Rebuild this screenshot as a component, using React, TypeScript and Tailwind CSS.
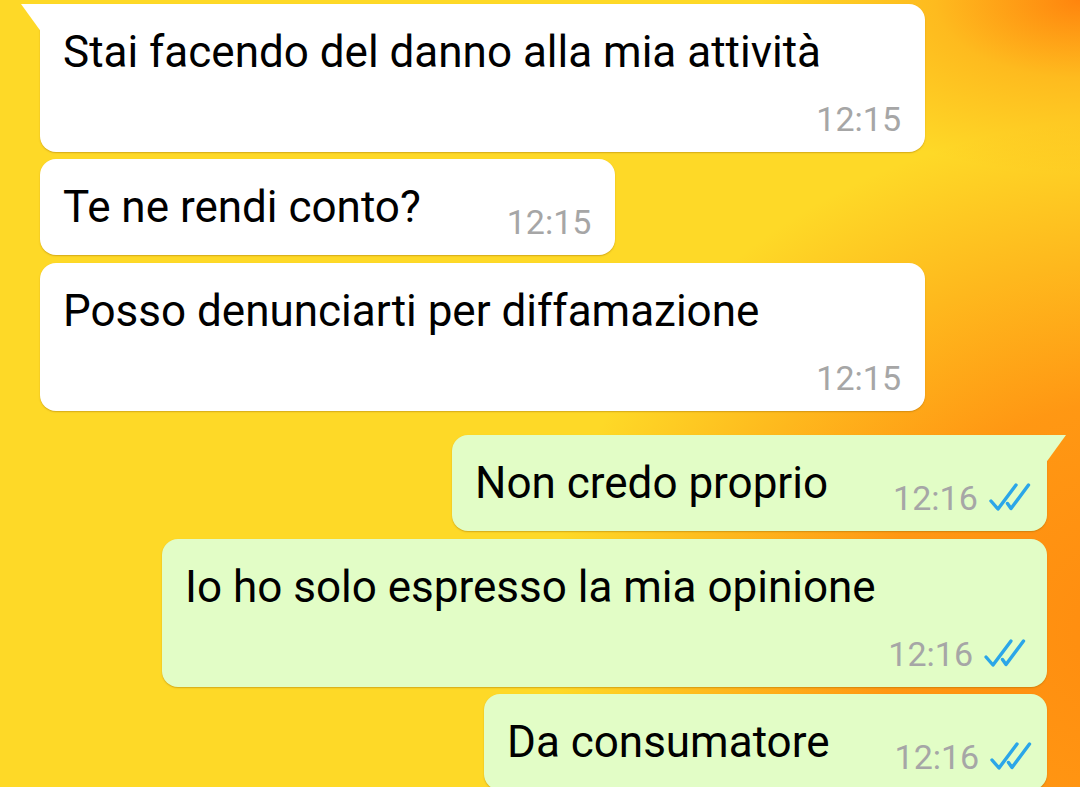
import React from "react";

type Msg = {
  id: number;
  text: string;
  time: string;
  out: boolean;
  inline: boolean;
  tail?: boolean;
  width: string;
  gap?: string;
  top: string;
};

const messages: Msg[] = [
  { id: 1, text: "Stai facendo del danno alla mia attività", time: "12:15", out: false, inline: false, tail: true, width: "w-[885px]", top: "mt-[4px]" },
  { id: 2, text: "Te ne rendi conto?", time: "12:15", out: false, inline: true, width: "w-[575px]", gap: "gap-[86px]", top: "mt-[7px]" },
  { id: 3, text: "Posso denunciarti per diffamazione", time: "12:15", out: false, inline: false, width: "w-[885px]", top: "mt-[8px]" },
  { id: 4, text: "Non credo proprio", time: "12:16", out: true, inline: true, tail: true, width: "w-[595px]", gap: "gap-[65px]", top: "mt-[24px]" },
  { id: 5, text: "Io ho solo espresso la mia opinione", time: "12:16", out: true, inline: false, width: "w-[885px]", top: "mt-[8px]" },
  { id: 6, text: "Da consumatore", time: "12:16", out: true, inline: true, width: "w-[563px]", gap: "gap-[65px]", top: "mt-[7px]" },
];

const Ticks = () => (
  <svg width="44" height="32" viewBox="0 0 44 32" fill="none" className="ml-[10px] mt-[-2px]">
    <path d="M3 20 L10 28 L28 4" stroke="#2ba6e8" strokeWidth="3.4" strokeLinecap="round" strokeLinejoin="round" />
    <path d="M19.5 22.5 L23 27.5 L40.5 4" stroke="#2ba6e8" strokeWidth="3.4" strokeLinecap="round" strokeLinejoin="round" />
  </svg>
);

const Time = ({ m }: { m: Msg }) => (
  <div className="flex items-center h-[40px] text-[34px] leading-[40px] text-[#a6a6a6]">
    <span>{m.time}</span>
    {m.out && <Ticks />}
  </div>
);

const Bubble = ({ m }: { m: Msg }) => {
  const bg = m.out ? "bg-[#e2fdc6]" : "bg-white";
  const corner = m.tail ? (m.out ? "rounded-tr-none" : "rounded-tl-none") : "";
  return (
    <div className={`flex ${m.out ? "justify-end pr-[33px]" : "pl-[40px]"} ${m.top}`}>
      <div
        className={`relative ${m.width} ${bg} ${corner} rounded-[16px] shadow-[0_1px_1.5px_rgba(150,100,0,0.4)] pl-[23px] ${m.out ? "pr-[20px]" : "pr-[24px]"} pt-[22px] pb-[13px]`}
      >
        {m.tail && !m.out && (
          <svg width="22" height="30" viewBox="0 0 22 30" className="absolute left-[-20px] top-0">
            <path d="M1 0 L22 0 L22 29 Z" fill="#ffffff" />
          </svg>
        )}
        {m.tail && m.out && (
          <svg width="22" height="30" viewBox="0 0 22 30" className="absolute right-[-20px] top-0">
            <path d="M21 0 L0 0 L0 29 Z" fill="#e2fdc6" />
          </svg>
        )}
        {m.inline ? (
          <div className={`flex ${m.gap}`}>
            <span className="text-[44px] leading-[52px] text-black whitespace-nowrap">{m.text}</span>
            <div className="mt-[21px]">
              <Time m={m} />
            </div>
          </div>
        ) : (
          <div className="flex flex-col">
            <span className="text-[44px] leading-[52px] text-black whitespace-nowrap">{m.text}</span>
            <div className="flex justify-end mt-[21px]">
              <Time m={m} />
            </div>
          </div>
        )}
      </div>
    </div>
  );
};

export default function App() {
  return (
    <div
      className="w-[1080px] h-[787px] overflow-hidden bg-[#fed927] bg-[radial-gradient(ellipse_30%_22%_at_100%_0%,rgba(255,128,12,0.95)_0%,rgba(255,150,20,0.45)_45%,rgba(255,200,30,0)_100%),radial-gradient(ellipse_55%_65%_at_106%_80%,rgba(255,140,15,1)_0%,rgba(255,148,18,0.95)_45%,rgba(255,210,40,0)_100%)]"
      style={{ fontFamily: "Roboto, 'Noto Sans', sans-serif" }}
    >
      {messages.map((m) => (
        <Bubble key={m.id} m={m} />
      ))}
    </div>
  );
}
